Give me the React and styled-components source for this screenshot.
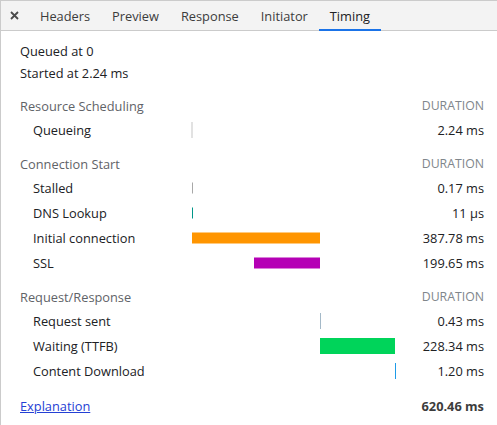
import styled, { createGlobalStyle } from "styled-components";

const GlobalStyle = createGlobalStyle`
  html, body {
    margin: 0;
    padding: 0;
    background: #fff;
  }
  body {
    font-family: "Open Sans", "Noto Sans", sans-serif;
    font-size: 12.8px;
    color: #202124;
  }
`;

const TOTAL = 620.46;
const SCALE = 204;

const sections = [
  {
    title: "Resource Scheduling",
    rows: [{ label: "Queueing", start: 0, dur: 2.24, text: "2.24 ms", color: "#e2e2e2", h: 16, min: 2, shift: -1 }],
  },
  {
    title: "Connection Start",
    rows: [
      { label: "Stalled", start: 2.24, dur: 0.17, text: "0.17 ms", color: "#a8a8a8", h: 11 },
      { label: "DNS Lookup", start: 2.41, dur: 0.011, text: "11 µs", color: "#009688", h: 11 },
      { label: "Initial connection", start: 2.41, dur: 387.78, text: "387.78 ms", color: "#ff9500", h: 11 },
      { label: "SSL", start: 190.54, dur: 199.65, text: "199.65 ms", color: "#b500b5", h: 11 },
    ],
  },
  {
    title: "Request/Response",
    rows: [
      { label: "Request sent", start: 390.19, dur: 0.43, text: "0.43 ms", color: "#a4b9c8", h: 16 },
      { label: "Waiting (TTFB)", start: 390.62, dur: 228.34, text: "228.34 ms", color: "#00d45a", h: 16 },
      { label: "Content Download", start: 618.96, dur: 1.2, text: "1.20 ms", color: "#1e9be8", h: 16 },
    ],
  },
];

const Panel = styled.div`
  box-sizing: border-box;
  min-height: 100vh;
  border-top: 1px solid #cbcbcb;
  border-left: 1px solid #cbcbcb;
  display: flex;
  flex-direction: column;
`;

const TabBar = styled.div`
  display: flex;
  align-items: stretch;
  height: 29px;
  background: #f3f3f3;
  border-bottom: 1px solid #cbcbcb;
`;

const CloseButton = styled.div`
  width: 27px;
  display: flex;
  align-items: center;
  justify-content: center;
  padding-right: 1px;
`;

const Tab = styled.div`
  position: relative;
  display: flex;
  align-items: center;
  padding: 0 11px;
  color: ${(p) => (p.$active ? "#202124" : "#3c3c3c")};
  &::after {
    content: "";
    display: ${(p) => (p.$active ? "block" : "none")};
    position: absolute;
    left: 0;
    right: 0;
    bottom: -1px;
    height: 2px;
    background: #1a73e8;
  }
`;

const Content = styled.div`
  padding: 9px 13px 0 19px;
`;

const InfoLine = styled.div`
  height: 22px;
  display: flex;
  align-items: center;
`;

const Section = styled.div`
  margin-top: 10px;
`;

const Row = styled.div`
  display: grid;
  grid-template-columns: 172px 205px 1fr;
  align-items: center;
  height: ${(p) => (p.$header ? 23 : 25)}px;
`;

const SectionTitle = styled.div`
  color: #5f6368;
`;

const DurationHead = styled.div`
  grid-column: 3;
  text-align: right;
  color: #80868b;
  font-size: 12.3px;
`;

const Label = styled.div`
  padding-left: 13px;
  white-space: nowrap;
`;

const BarTrack = styled.div`
  position: relative;
  height: 100%;
`;

const Bar = styled.div`
  position: absolute;
  top: 50%;
  transform: translateY(-50%);
  height: ${(p) => p.$h}px;
  background: ${(p) => p.$color};
`;

const Duration = styled.div`
  text-align: right;
  white-space: nowrap;
  font-weight: ${(p) => (p.$bold ? 700 : 400)};
  color: ${(p) => (p.$bold ? "#3c3c3c" : "#202124")};
`;

const Link = styled.a`
  color: #2440d4;
  text-decoration: underline;
  cursor: pointer;
`;

function CloseIcon() {
  return (
    <svg width="9" height="9" viewBox="0 0 9 9">
      <path d="M1 1 L8 8 M8 1 L1 8" stroke="#4a4a4a" strokeWidth="1.8" />
    </svg>
  );
}

function TimingBar({ row }) {
  const from = Math.floor((row.start / TOTAL) * SCALE);
  const to = Math.floor(((row.start + row.dur) / TOTAL) * SCALE);
  const width = Math.max(row.min || 1, to - from);
  return (
    <BarTrack>
      <Bar $h={row.h} $color={row.color} style={{ left: from + (row.shift || 0), width }} />
    </BarTrack>
  );
}

export default function App() {
  const tabs = ["Headers", "Preview", "Response", "Initiator", "Timing"];
  return (
    <>
      <GlobalStyle />
      <Panel>
        <TabBar>
          <CloseButton>
            <CloseIcon />
          </CloseButton>
          {tabs.map((t) => (
            <Tab key={t} $active={t === "Timing"}>
              {t}
            </Tab>
          ))}
        </TabBar>
        <Content>
          <InfoLine>Queued at 0</InfoLine>
          <InfoLine>Started at 2.24 ms</InfoLine>
          {sections.map((s) => (
            <Section key={s.title}>
              <Row $header>
                <SectionTitle>{s.title}</SectionTitle>
                <DurationHead>DURATION</DurationHead>
              </Row>
              {s.rows.map((r) => (
                <Row key={r.label}>
                  <Label>{r.label}</Label>
                  <TimingBar row={r} />
                  <Duration>{r.text}</Duration>
                </Row>
              ))}
            </Section>
          ))}
          <Section>
            <Row>
              <Link>Explanation</Link>
              <div />
              <Duration $bold>620.46 ms</Duration>
            </Row>
          </Section>
        </Content>
      </Panel>
    </>
  );
}
